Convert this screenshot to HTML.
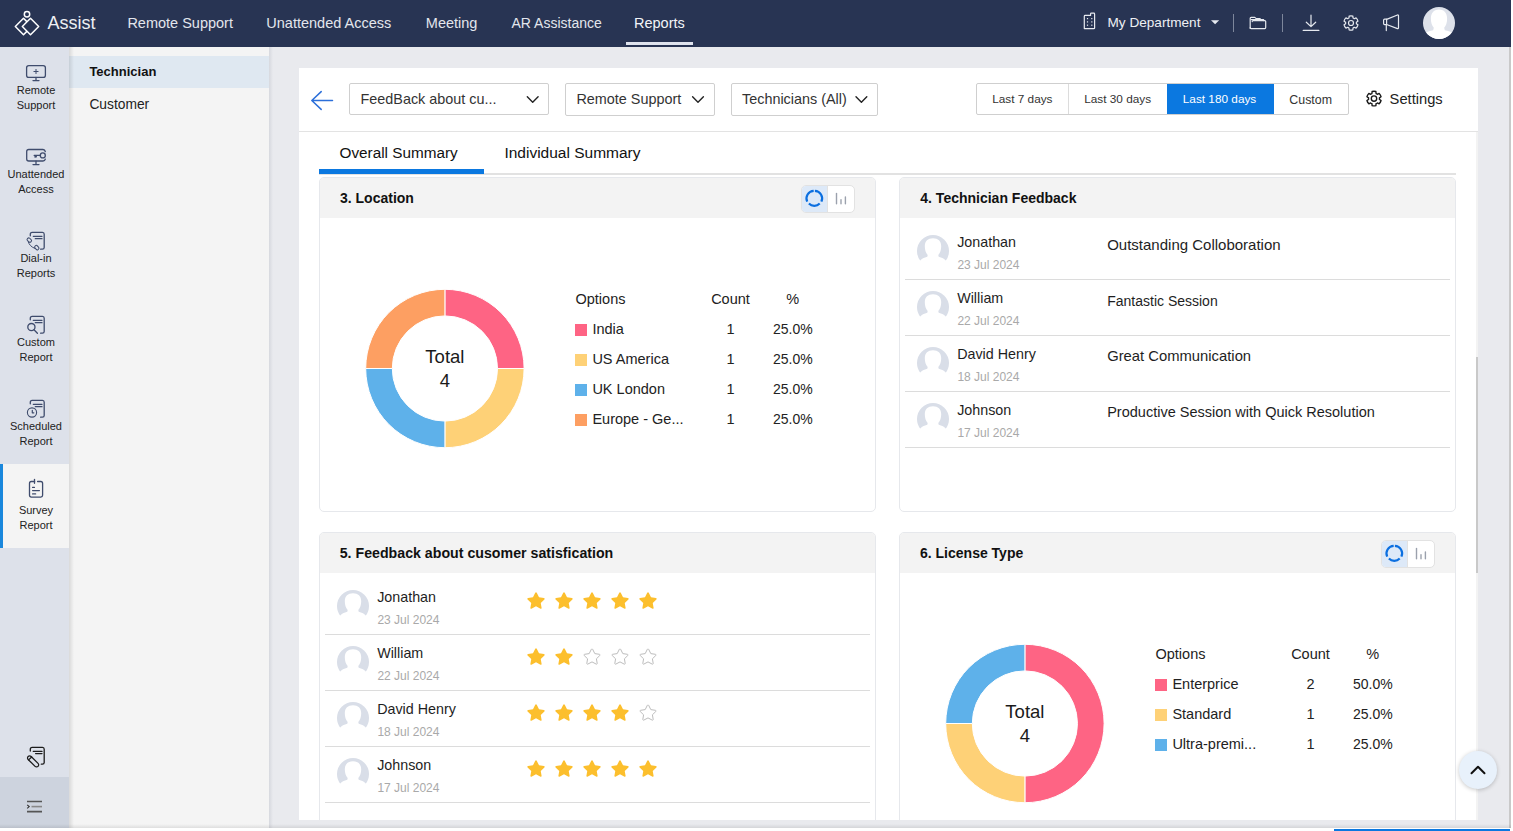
<!DOCTYPE html>
<html><head><meta charset="utf-8">
<style>
*{box-sizing:border-box;margin:0;padding:0}
html,body{width:1513px;height:831px;overflow:hidden;background:#fff;font-family:"Liberation Sans",sans-serif;color:#222}
.a{position:absolute;white-space:nowrap;line-height:1}
#hdr{position:absolute;left:0;top:0;width:1511px;height:47px;background:#283453}
.nav{color:#e3e6ed;font-size:14.5px}
#side{position:absolute;left:0;top:47px;width:69px;height:781px;background:#dde1ea}
.si{position:absolute;left:0;width:69px;height:84px}
.sl{position:absolute;left:0;width:72px;text-align:center;font-size:11px;line-height:15px;color:#222;white-space:normal}
#p2{position:absolute;left:69px;top:47px;width:200px;height:781px;background:#f4f4f4}
#main{position:absolute;left:269px;top:47px;width:1242px;height:781px;background:#e9eaee}
#wc{position:absolute;left:299px;top:68px;width:1179px;height:752px;background:#fff}
.dd{position:absolute;top:83px;height:33px;border:1px solid #cfcfcf;border-radius:2px;background:#fff}
.ddt{position:absolute;font-size:14.4px;color:#333}
.card{position:absolute;width:557px;border:1px solid #e6e8ec;border-radius:5px;background:#fff;overflow:hidden}
.ch{position:absolute;left:0;top:0;right:0;height:40px;background:#f3f3f3}
.ct{position:absolute;left:20px;font-size:14px;font-weight:bold;color:#111}
.lg{position:absolute;font-size:14.5px;color:#222}
.sw{position:absolute;width:12px;height:12px}
.nm{position:absolute;font-size:14.3px;color:#1e1e1e}
.dt{position:absolute;font-size:12px;color:#a9a9a9}
.hr{position:absolute;height:1px;background:#dcdcdc}
</style></head><body>

<!-- HEADER -->
<div id="hdr">
 <svg class="a" style="left:0;top:0" width="46" height="47" viewBox="0 0 46 47">
  <g fill="none" stroke="#fff" stroke-width="1.5" stroke-linejoin="round" stroke-linecap="round">
   <circle cx="27" cy="14.3" r="2.7"/>
   <path d="M26.6 21.4 L23.5 18.3 L15.3 26.5 L23.5 34.7 L26.6 31.6"/>
   <path d="M30.5 18.3 L38.7 26.5 L30.5 34.7 L22.3 26.5 Z"/>
  </g>
 </svg>
 <div class="a" style="left:47.5px;top:13.8px;font-size:18px;color:#eef0f4">Assist</div>
 <div class="a nav" style="left:127.4px;top:15.8px">Remote Support</div>
 <div class="a nav" style="left:266.3px;top:15.8px">Unattended Access</div>
 <div class="a nav" style="left:425.8px;top:15.8px">Meeting</div>
 <div class="a nav" style="left:511.5px;top:16.2px;font-size:14px">AR Assistance</div>
 <div class="a nav" style="left:634px;top:15.8px;color:#f2f4f8">Reports</div>

 <svg class="a" style="left:1070px;top:0" width="400" height="47" viewBox="1070 0 400 47">
  <g fill="none" stroke="#e6e9ef" stroke-width="1.2" stroke-linejoin="round" stroke-linecap="round">
   <!-- building -->
   <path d="M1084.3 28.6 V16.2 C1084.3 15.7 1084.6 15.4 1085.1 15.4 H1090.6 V13.8 C1090.6 13.3 1090.9 13.1 1091.4 13.1 H1093.8 C1094.3 13.1 1094.6 13.4 1094.6 13.9 V27.9 C1094.6 28.4 1094.3 28.6 1093.8 28.6 Z"/>
   <!-- folder -->
   <path d="M1250.2 28.5 V18.3 C1250.2 17.7 1250.5 17.4 1251.1 17.4 H1254.8 L1256.2 18.6 H1260.2" />
   <path d="M1252.2 21.6 C1252.2 21 1252.5 20.6 1253.1 20.6 H1264.8 C1265.4 20.6 1265.7 21 1265.7 21.6 V27.6 C1265.7 28.2 1265.4 28.6 1264.8 28.6 H1251.1 C1250.5 28.6 1250.2 28.2 1250.2 27.6"/>
   <path d="M1251.2 19.6 H1263.6 V20.6"/>
   <!-- download -->
   <path d="M1311 15.2 V26.3 M1306.3 22.2 L1311 26.6 L1315.7 22.2"/>
   <path d="M1303.3 30.4 H1318.8" stroke-width="1.4"/>
   <!-- megaphone -->
   <path d="M1386.6 19.4 L1397.5 15 C1398 14.8 1398.5 15.1 1398.5 15.6 V28 C1398.5 28.5 1398 28.8 1397.5 28.6 L1386.6 24.5"/>
   <path d="M1386.6 19.2 H1384.6 C1384 19.2 1383.6 19.6 1383.6 20.2 V23.6 C1383.6 24.2 1384 24.6 1384.6 24.6 H1386.6 Z"/>
   <path d="M1386.3 24.8 V30.6"/>
  </g>
  <g fill="#e6e9ef">
   <rect x="1086.9" y="18" width="1.2" height="1.2"/><rect x="1091.2" y="18" width="1.2" height="1.2"/>
   <rect x="1086.9" y="21.3" width="1.2" height="1.2"/><rect x="1091.2" y="21.3" width="1.2" height="1.2"/>
   <rect x="1086.9" y="24.6" width="1.2" height="1.2"/><rect x="1091.2" y="24.6" width="1.2" height="1.2"/>
   <path d="M1211 20.3 H1219.2 L1215.1 24.3 Z"/>
  </g>
  <rect x="1233" y="14" width="1" height="18" fill="#7d869b"/>
  <rect x="1282" y="14" width="1" height="18" fill="#7d869b"/>
  <g fill="none" stroke="#e6e9ef" stroke-width="1.2" stroke-linejoin="round"><path d="M1349.14 16.05 A7.20 7.20 0 0 1 1352.86 16.05 L1353.02 17.99 A5.40 5.40 0 0 1 1354.32 18.74 L1356.09 17.91 A7.20 7.20 0 0 1 1357.95 21.14 L1356.35 22.25 A5.40 5.40 0 0 1 1356.35 23.75 L1357.95 24.86 A7.20 7.20 0 0 1 1356.09 28.09 L1354.32 27.26 A5.40 5.40 0 0 1 1353.02 28.01 L1352.86 29.95 A7.20 7.20 0 0 1 1349.14 29.95 L1348.98 28.01 A5.40 5.40 0 0 1 1347.68 27.26 L1345.91 28.09 A7.20 7.20 0 0 1 1344.05 24.86 L1345.65 23.75 A5.40 5.40 0 0 1 1345.65 22.25 L1344.05 21.14 A7.20 7.20 0 0 1 1345.91 17.91 L1347.68 18.74 A5.40 5.40 0 0 1 1348.98 17.99 L1349.14 16.05 Z"/><circle cx="1351" cy="23" r="2.5"/></g>
  <clipPath id="avc"><circle cx="1439" cy="23" r="16"/></clipPath>
  <circle cx="1439" cy="23" r="16" fill="#dde1ea"/>
  <path clip-path="url(#avc)" d="M1439 9.6 C1433.4 9.6 1430.9 13.6 1430.9 18.8 C1430.9 22.6 1432 25.8 1433.8 27.8 L1433.2 30.2 C1428.5 31 1425 32.6 1423 35 L1423 40 L1455 40 L1455 35 C1453 32.6 1449.5 31 1444.8 30.2 L1444.2 27.8 C1446 25.8 1447.1 22.6 1447.1 18.8 C1447.1 13.6 1444.6 9.6 1439 9.6 Z" fill="#fff"/>
 </svg>
 <div class="a" style="left:1107.5px;top:16.2px;font-size:13.6px;color:#eef0f4">My Department</div>
 <div class="a" style="left:626px;top:42px;width:67px;height:3px;background:#dfe3ee"></div>
</div>

<!-- SIDEBAR -->
<div id="side">
 <div class="a" style="left:0;top:417px;width:69px;height:84px;background:#f4f4f4"></div>
 <div class="a" style="left:0;top:417px;width:3px;height:84px;background:#1a87dc"></div>
 <div class="a" style="left:0;top:730px;width:69px;height:51px;background:#cdd3de"></div>
</div>
<svg class="a" style="left:0;top:47px" width="69" height="781" viewBox="0 47 69 781">
 <g fill="none" stroke="#3f4c6d" stroke-width="1.3" stroke-linecap="round" stroke-linejoin="round">
  <!-- remote support -->
  <rect x="26.6" y="65.6" width="18.8" height="11.8" rx="2.2"/>
  <path d="M36 77.5 V80.3 M33 80.6 H39" />
  <path d="M36 69.4 V73.6 M33.9 71.5 H38.1" stroke-width="1"/>
  <!-- unattended -->
  <path d="M45.3 151.6 C45 150 44.3 149.5 43 149.5 H28.8 C27.4 149.5 26.7 150.2 26.7 151.6 V158.9 C26.7 160.3 27.4 161 28.8 161 H43 C44.3 161 45 160.5 45.3 159.2"/>
  <circle cx="42.8" cy="155.4" r="2.5"/>
  <path d="M34.2 155.4 H40.3 M35.2 155.6 L35 157.2 M36.4 155.6 L36.2 156.8" />
  <path d="M36 161.2 V164.2 M33 164.6 H39" />
  <!-- dial-in -->
  <path d="M30.3 235.8 V234.3 C30.3 233.2 31.1 232.4 32.2 232.4 H42.5 C43.6 232.4 44.2 233.2 44.2 234.3 V247.4 C44.2 248.5 43.5 249.2 42.4 249.2 H40.6"/>
  <path d="M33.3 236.3 H42 M35.3 238.7 H42"/>
  <rect x="-2.3" y="-1.6" width="4.6" height="3.2" rx="1.3" transform="translate(29.3 240.1) rotate(40)" stroke-width="1"/>
  <rect x="-2.3" y="-1.6" width="4.6" height="3.2" rx="1.3" transform="translate(36.8 247.6) rotate(50)" stroke-width="1"/>
  <path d="M28.3 241.9 C29 244.6 31.2 246.9 34.6 248.3" stroke-width="1"/>
  <!-- custom report -->
  <path d="M30.3 319.8 V318.3 C30.3 317.2 31.1 316.4 32.2 316.4 H42.5 C43.6 316.4 44.2 317.2 44.2 318.3 V331.4 C44.2 332.5 43.5 333.2 42.4 333.2 H40.6"/>
  <path d="M33.3 320.3 H42 M35.3 322.7 H42"/>
  <circle cx="31.4" cy="327.1" r="3.6"/>
  <path d="M34 329.8 L37.4 333.2"/>
  <!-- scheduled -->
  <path d="M30.3 403.8 V402.3 C30.3 401.2 31.1 400.4 32.2 400.4 H42.5 C43.6 400.4 44.2 401.2 44.2 402.3 V415.4 C44.2 416.5 43.5 417.2 42.4 417.2 H40.6"/>
  <path d="M33.3 404.3 H42 M35.3 406.7 H42"/>
  <circle cx="32" cy="412.5" r="4.6" stroke-width="1.1"/>
  <path d="M32.3 410.3 V412.8 H33.8" stroke-width="1.2"/>
  <!-- survey -->
  <path d="M34.6 481.5 H31.3 C30.1 481.5 29.5 482.2 29.5 483.4 V495.3 C29.5 496.5 30.2 497.1 31.4 497.1 H40.8 C42 497.1 42.6 496.5 42.6 495.3 V483.4 C42.6 482.2 42 481.5 40.8 481.5 H37.6"/>
  <path d="M34.5 479.4 V483.3"/>
  <path d="M32.6 487.4 H34.4 M32.6 490.6 H39.4 M32.6 493.9 H35.6"/>
 </g>
 <g fill="none" stroke="#1c1c1c" stroke-width="1.3" stroke-linecap="round" stroke-linejoin="round">
  <path d="M30.3 751 V749.3 C30.3 748.2 31.1 747.4 32.2 747.4 H42.5 C43.6 747.4 44.2 748.2 44.2 749.3 V762.4 C44.2 763.5 43.5 764.2 42.4 764.2 H41.3"/>
  <path d="M33.3 751.4 H42 M35.6 753.6 H42"/>
  <rect x="-7" y="-2.1" width="14" height="4.2" rx="2.1" transform="translate(33.1 761.4) rotate(45)" fill="#dde1ea"/>
  <path d="M-4.2 -2.1 V2.1" transform="translate(33.1 761.4) rotate(45)"/>
 </g>
 <g fill="none" stroke="#555" stroke-width="1.6">
  <path d="M27 801.5 H42 M27 811.6 H42"/><path d="M31.5 806.6 H42" stroke="#888"/>
  <path d="M27.2 804.8 L29.2 806.6 L27.2 808.4" stroke="#333" stroke-width="1.1"/>
 </g>
</svg>
<div class="sl" style="top:82.5px">Remote<br>Support</div>
<div class="sl" style="top:166.5px">Unattended<br>Access</div>
<div class="sl" style="top:250.5px">Dial-in<br>Reports</div>
<div class="sl" style="top:334.5px">Custom<br>Report</div>
<div class="sl" style="top:418.5px">Scheduled<br>Report</div>
<div class="sl" style="top:502.5px">Survey<br>Report</div>
<!-- PANEL 2 -->
<div id="p2">
 <div class="a" style="left:0;top:9px;width:200px;height:32px;background:#dfe8f1"></div>
 <div class="a" style="left:20.4px;top:18.2px;font-size:13px;font-weight:bold;color:#111">Technician</div>
 <div class="a" style="left:20.4px;top:50.6px;font-size:13.8px;color:#222">Customer</div>
 <div class="a" style="left:0;top:0;width:5px;height:781px;background:linear-gradient(to right,rgba(0,0,0,0.11),rgba(0,0,0,0))"></div>
</div>

<!-- MAIN -->
<div id="main"><div class="a" style="left:0;top:0;width:4px;height:781px;background:linear-gradient(to right,#d6d8de,#e9eaee)"></div></div>
<div id="wc">
 <svg class="a" style="left:10px;top:22px" width="26" height="22" viewBox="0 0 26 22">
  <path d="M23.5 10.5 H3 M12.2 1.6 L2.8 10.5 L12.2 19.4" fill="none" stroke="#2c6fd9" stroke-width="1.5" stroke-linecap="round" stroke-linejoin="round"/>
 </svg>
 <div class="a" style="left:0;top:63px;width:1179px;height:1px;background:#e3e3e3"></div>
 <div class="a" style="left:1177px;top:64px;width:2px;height:688px;background:#f3f3f3"></div>
 <div class="a" style="left:1177px;top:289px;width:2px;height:216px;background:#c9c9c9"></div>
</div>
<div class="dd" style="left:349px;width:200px;height:32px"></div>
<div class="a ddt" style="left:360.5px;top:91.8px">FeedBack about cu...</div>
<div class="dd" style="left:565px;width:150px"></div>
<div class="a ddt" style="left:576.4px;top:91.8px">Remote Support</div>
<div class="dd" style="left:731px;width:147px"></div>
<div class="a ddt" style="left:742px;top:91.8px">Technicians (All)</div>
<svg class="a" style="left:0;top:0" width="900" height="120">
 <g fill="none" stroke="#222" stroke-width="1.4" stroke-linecap="round" stroke-linejoin="round">
  <path d="M527.3 96.8 L532.7 102.2 L538.1 96.8"/>
  <path d="M692.6 96.8 L698 102.2 L703.4 96.8"/>
  <path d="M856 96.8 L861.4 102.2 L866.8 96.8"/>
 </g>
</svg>
<!-- date range -->
<div class="a" style="left:976px;top:83px;width:373px;height:32px;border:1px solid #cfcfcf;border-radius:2px;background:#fff"></div>
<div class="a" style="left:1068px;top:84px;width:1px;height:30px;background:#dcdcdc"></div>
<div class="a" style="left:1167px;top:84px;width:107px;height:30px;background:#0b78e0"></div>
<div class="a" style="left:992.2px;top:93.6px;font-size:11.8px;color:#333">Last 7 days</div>
<div class="a" style="left:1084.2px;top:93.6px;font-size:11.8px;color:#333">Last 30 days</div>
<div class="a" style="left:1182.8px;top:93.6px;font-size:11.8px;color:#fff">Last 180 days</div>
<div class="a" style="left:1289.3px;top:93.6px;font-size:12.4px;color:#333">Custom</div>
<svg class="a" style="left:1354px;top:80px" width="40" height="40" viewBox="1354 80 40 40"><g fill="none" stroke="#1a1a1a" stroke-width="1.4" stroke-linejoin="round"><path d="M1372.11 91.55 A7.30 7.30 0 0 1 1375.89 91.55 L1376.06 93.50 A5.50 5.50 0 0 1 1377.39 94.27 L1379.16 93.44 A7.30 7.30 0 0 1 1381.05 96.71 L1379.45 97.83 A5.50 5.50 0 0 1 1379.45 99.37 L1381.05 100.49 A7.30 7.30 0 0 1 1379.16 103.76 L1377.39 102.93 A5.50 5.50 0 0 1 1376.06 103.70 L1375.89 105.65 A7.30 7.30 0 0 1 1372.11 105.65 L1371.94 103.70 A5.50 5.50 0 0 1 1370.61 102.93 L1368.84 103.76 A7.30 7.30 0 0 1 1366.95 100.49 L1368.55 99.37 A5.50 5.50 0 0 1 1368.55 97.83 L1366.95 96.71 A7.30 7.30 0 0 1 1368.84 93.44 L1370.61 94.27 A5.50 5.50 0 0 1 1371.94 93.50 L1372.11 91.55 Z"/><circle cx="1374" cy="98.6" r="2.7"/></g></svg>
<div class="a" style="left:1389.6px;top:91.6px;font-size:14.7px;color:#222">Settings</div>
<!-- cards -->
<div class="a" style="left:299px;top:132px;width:1177px;height:688px;overflow:hidden"><div class="a" style="left:-299px;top:-132px;width:1513px;height:831px">
<div class="card" style="left:319px;top:177px;height:335px"><div class="ch"></div></div>
<div class="a ct" style="left:340px;top:191.1px">3. Location</div>
<div class="a" style="left:801px;top:184.5px;width:54px;height:28px;border:1px solid #e2e2e2;border-radius:5px;background:#fff;overflow:hidden">
  <div class="a" style="left:0;top:0;width:25px;height:26px;background:#dde9f8"></div>
  <div class="a" style="left:25px;top:0;width:1px;height:26px;background:#e2e2e2"></div>
 </div>
 <svg class="a" style="left:801px;top:184.5px" width="54" height="28" viewBox="0 0 54 28">
  <g fill="none" stroke="#0b6fe0" stroke-width="2.2">
   <path d="M12.7 5.8 A7.6 7.6 0 0 0 6.2 16.6"/>
   <path d="M7.9 18.6 A7.6 7.6 0 0 0 18.7 18.6"/>
   <path d="M20.4 16.6 A7.6 7.6 0 0 0 13.9 5.8"/>
  </g>
  <g stroke="#9ba1ad" stroke-width="1.4" stroke-linecap="round">
   <path d="M35.5 8.4 V18.8"/><path d="M40 14.8 V18.8"/><path d="M44.4 11.9 V18.8"/>
  </g>
 </svg>
<svg class="a" style="left:359px;top:283px" width="172" height="172" viewBox="359 283 172 172"><path d="M444.90 289.30 A79.2 79.2 0 0 1 524.10 368.50 L497.50 368.50 A52.6 52.6 0 0 0 444.90 315.90 Z" fill="#fe6484" stroke="#fff" stroke-width="1"/><path d="M524.10 368.50 A79.2 79.2 0 0 1 444.90 447.70 L444.90 421.10 A52.6 52.6 0 0 0 497.50 368.50 Z" fill="#fed177" stroke="#fff" stroke-width="1"/><path d="M444.90 447.70 A79.2 79.2 0 0 1 365.70 368.50 L392.30 368.50 A52.6 52.6 0 0 0 444.90 421.10 Z" fill="#5eb1ea" stroke="#fff" stroke-width="1"/><path d="M365.70 368.50 A79.2 79.2 0 0 1 444.90 289.30 L444.90 315.90 A52.6 52.6 0 0 0 392.30 368.50 Z" fill="#fd9f62" stroke="#fff" stroke-width="1"/></svg>
<div class="a" style="left:404.9px;width:80px;text-align:center;top:347.5px;font-size:18.5px;color:#1a1a1a">Total</div>
<div class="a" style="left:404.9px;width:80px;text-align:center;top:372.0px;font-size:18.5px;color:#1a1a1a">4</div>
<div class="a lg" style="left:575.5px;top:291.9px">Options</div>
<div class="a lg" style="left:700.5px;width:60px;text-align:center;top:291.9px">Count</div>
<div class="a lg" style="left:762.8px;width:60px;text-align:center;top:291.9px">%</div>
<div class="a sw" style="left:575px;top:324.1px;background:#fe6484"></div>
<div class="a lg" style="left:592.4px;top:322.1px">India</div>
<div class="a lg" style="left:700.5px;width:60px;text-align:center;top:322.1px">1</div>
<div class="a lg" style="font-size:14px;left:762.8px;width:60px;text-align:center;top:321.7px">25.0%</div>
<div class="a sw" style="left:575px;top:354.1px;background:#fed177"></div>
<div class="a lg" style="left:592.4px;top:352.1px">US America</div>
<div class="a lg" style="left:700.5px;width:60px;text-align:center;top:352.1px">1</div>
<div class="a lg" style="font-size:14px;left:762.8px;width:60px;text-align:center;top:351.7px">25.0%</div>
<div class="a sw" style="left:575px;top:384.1px;background:#5eb1ea"></div>
<div class="a lg" style="left:592.4px;top:382.1px">UK London</div>
<div class="a lg" style="left:700.5px;width:60px;text-align:center;top:382.1px">1</div>
<div class="a lg" style="font-size:14px;left:762.8px;width:60px;text-align:center;top:381.7px">25.0%</div>
<div class="a sw" style="left:575px;top:414.1px;background:#fd9f62"></div>
<div class="a lg" style="left:592.4px;top:412.1px">Europe - Ge...</div>
<div class="a lg" style="left:700.5px;width:60px;text-align:center;top:412.1px">1</div>
<div class="a lg" style="font-size:14px;left:762.8px;width:60px;text-align:center;top:411.7px">25.0%</div>
<div class="card" style="left:899px;top:177px;height:335px"><div class="ch"></div></div>
<div class="a ct" style="left:920.3px;top:191.0px">4. Technician Feedback</div>
<svg class="a" style="left:916px;top:234px" width="34" height="32" viewBox="0 0 34 32"><defs><clipPath id="c1"><rect x="0" y="0" width="34" height="27"/></clipPath></defs>
<g clip-path="url(#c1)"><circle cx="17" cy="17" r="16" fill="#d9dee8"/>
<path d="M17 4.3 C11.9 4.3 8.8 7.3 8.8 12.2 C8.8 15.8 9.8 18.9 11.7 21 L11.3 22.7 C8.1 23.5 5.3 24.9 3.7 27.2 L3 32 H31 L30.3 27.2 C28.7 24.9 25.9 23.5 22.7 22.7 L22.3 21 C24.2 18.9 25.2 15.8 25.2 12.2 C25.2 7.3 22.1 4.3 17 4.3 Z" fill="#fff"/></g></svg>
<div class="a nm" style="left:957.2px;top:234.6px">Jonathan</div>
<div class="a dt" style="left:957.4px;top:258.8px">23 Jul 2024</div>
<div class="a" style="left:1107.2px;top:237.0px;font-size:15px;color:#1e1e1e">Outstanding Colloboration</div>
<div class="a hr" style="left:905px;top:279px;width:545px"></div>
<svg class="a" style="left:916px;top:290px" width="34" height="32" viewBox="0 0 34 32"><defs><clipPath id="c2"><rect x="0" y="0" width="34" height="27"/></clipPath></defs>
<g clip-path="url(#c2)"><circle cx="17" cy="17" r="16" fill="#d9dee8"/>
<path d="M17 4.3 C11.9 4.3 8.8 7.3 8.8 12.2 C8.8 15.8 9.8 18.9 11.7 21 L11.3 22.7 C8.1 23.5 5.3 24.9 3.7 27.2 L3 32 H31 L30.3 27.2 C28.7 24.9 25.9 23.5 22.7 22.7 L22.3 21 C24.2 18.9 25.2 15.8 25.2 12.2 C25.2 7.3 22.1 4.3 17 4.3 Z" fill="#fff"/></g></svg>
<div class="a nm" style="left:957.2px;top:290.6px">William</div>
<div class="a dt" style="left:957.4px;top:314.8px">22 Jul 2024</div>
<div class="a" style="left:1107.2px;top:293.8px;font-size:14px;color:#1e1e1e">Fantastic Session</div>
<div class="a hr" style="left:905px;top:335px;width:545px"></div>
<svg class="a" style="left:916px;top:346px" width="34" height="32" viewBox="0 0 34 32"><defs><clipPath id="c3"><rect x="0" y="0" width="34" height="27"/></clipPath></defs>
<g clip-path="url(#c3)"><circle cx="17" cy="17" r="16" fill="#d9dee8"/>
<path d="M17 4.3 C11.9 4.3 8.8 7.3 8.8 12.2 C8.8 15.8 9.8 18.9 11.7 21 L11.3 22.7 C8.1 23.5 5.3 24.9 3.7 27.2 L3 32 H31 L30.3 27.2 C28.7 24.9 25.9 23.5 22.7 22.7 L22.3 21 C24.2 18.9 25.2 15.8 25.2 12.2 C25.2 7.3 22.1 4.3 17 4.3 Z" fill="#fff"/></g></svg>
<div class="a nm" style="left:957.2px;top:346.6px">David Henry</div>
<div class="a dt" style="left:957.4px;top:370.8px">18 Jul 2024</div>
<div class="a" style="left:1107.2px;top:349.2px;font-size:14.8px;color:#1e1e1e">Great Communication</div>
<div class="a hr" style="left:905px;top:391px;width:545px"></div>
<svg class="a" style="left:916px;top:402px" width="34" height="32" viewBox="0 0 34 32"><defs><clipPath id="c4"><rect x="0" y="0" width="34" height="27"/></clipPath></defs>
<g clip-path="url(#c4)"><circle cx="17" cy="17" r="16" fill="#d9dee8"/>
<path d="M17 4.3 C11.9 4.3 8.8 7.3 8.8 12.2 C8.8 15.8 9.8 18.9 11.7 21 L11.3 22.7 C8.1 23.5 5.3 24.9 3.7 27.2 L3 32 H31 L30.3 27.2 C28.7 24.9 25.9 23.5 22.7 22.7 L22.3 21 C24.2 18.9 25.2 15.8 25.2 12.2 C25.2 7.3 22.1 4.3 17 4.3 Z" fill="#fff"/></g></svg>
<div class="a nm" style="left:957.2px;top:402.6px">Johnson</div>
<div class="a dt" style="left:957.4px;top:426.8px">17 Jul 2024</div>
<div class="a" style="left:1107.2px;top:405.4px;font-size:14.5px;color:#1e1e1e">Productive Session with Quick Resolution</div>
<div class="a hr" style="left:905px;top:447px;width:545px"></div>
<div class="card" style="left:319px;top:532px;height:400px"><div class="ch"></div></div>
<div class="a ct" style="left:339.7px;top:546.0px;font-size:14.2px">5. Feedback about cusomer satisfication</div>
<svg class="a" style="left:336px;top:589px" width="34" height="32" viewBox="0 0 34 32"><defs><clipPath id="c5"><rect x="0" y="0" width="34" height="27"/></clipPath></defs>
<g clip-path="url(#c5)"><circle cx="17" cy="17" r="16" fill="#d9dee8"/>
<path d="M17 4.3 C11.9 4.3 8.8 7.3 8.8 12.2 C8.8 15.8 9.8 18.9 11.7 21 L11.3 22.7 C8.1 23.5 5.3 24.9 3.7 27.2 L3 32 H31 L30.3 27.2 C28.7 24.9 25.9 23.5 22.7 22.7 L22.3 21 C24.2 18.9 25.2 15.8 25.2 12.2 C25.2 7.3 22.1 4.3 17 4.3 Z" fill="#fff"/></g></svg>
<div class="a nm" style="left:377.2px;top:589.6px">Jonathan</div>
<div class="a dt" style="left:377.4px;top:613.8px">23 Jul 2024</div>
<svg class="a" style="left:527px;top:592px" width="18" height="18" viewBox="0 0 18 18"><path d="M9 1.2 C9.3 1.2 9.5 1.4 9.7 1.7 L11.8 5.9 L16.4 6.6 C17 6.7 17.2 7.4 16.8 7.8 L13.4 11.1 L14.2 15.7 C14.3 16.3 13.7 16.7 13.2 16.4 L9 14.2 L4.8 16.4 C4.3 16.7 3.7 16.3 3.8 15.7 L4.6 11.1 L1.2 7.8 C0.8 7.4 1 6.7 1.6 6.6 L6.2 5.9 L8.3 1.7 C8.5 1.4 8.7 1.2 9 1.2 Z" fill="#fcbf2d" transform="translate(9 9) scale(1.08) translate(-9 -9.3)"/></svg><svg class="a" style="left:555px;top:592px" width="18" height="18" viewBox="0 0 18 18"><path d="M9 1.2 C9.3 1.2 9.5 1.4 9.7 1.7 L11.8 5.9 L16.4 6.6 C17 6.7 17.2 7.4 16.8 7.8 L13.4 11.1 L14.2 15.7 C14.3 16.3 13.7 16.7 13.2 16.4 L9 14.2 L4.8 16.4 C4.3 16.7 3.7 16.3 3.8 15.7 L4.6 11.1 L1.2 7.8 C0.8 7.4 1 6.7 1.6 6.6 L6.2 5.9 L8.3 1.7 C8.5 1.4 8.7 1.2 9 1.2 Z" fill="#fcbf2d" transform="translate(9 9) scale(1.08) translate(-9 -9.3)"/></svg><svg class="a" style="left:583px;top:592px" width="18" height="18" viewBox="0 0 18 18"><path d="M9 1.2 C9.3 1.2 9.5 1.4 9.7 1.7 L11.8 5.9 L16.4 6.6 C17 6.7 17.2 7.4 16.8 7.8 L13.4 11.1 L14.2 15.7 C14.3 16.3 13.7 16.7 13.2 16.4 L9 14.2 L4.8 16.4 C4.3 16.7 3.7 16.3 3.8 15.7 L4.6 11.1 L1.2 7.8 C0.8 7.4 1 6.7 1.6 6.6 L6.2 5.9 L8.3 1.7 C8.5 1.4 8.7 1.2 9 1.2 Z" fill="#fcbf2d" transform="translate(9 9) scale(1.08) translate(-9 -9.3)"/></svg><svg class="a" style="left:611px;top:592px" width="18" height="18" viewBox="0 0 18 18"><path d="M9 1.2 C9.3 1.2 9.5 1.4 9.7 1.7 L11.8 5.9 L16.4 6.6 C17 6.7 17.2 7.4 16.8 7.8 L13.4 11.1 L14.2 15.7 C14.3 16.3 13.7 16.7 13.2 16.4 L9 14.2 L4.8 16.4 C4.3 16.7 3.7 16.3 3.8 15.7 L4.6 11.1 L1.2 7.8 C0.8 7.4 1 6.7 1.6 6.6 L6.2 5.9 L8.3 1.7 C8.5 1.4 8.7 1.2 9 1.2 Z" fill="#fcbf2d" transform="translate(9 9) scale(1.08) translate(-9 -9.3)"/></svg><svg class="a" style="left:639px;top:592px" width="18" height="18" viewBox="0 0 18 18"><path d="M9 1.2 C9.3 1.2 9.5 1.4 9.7 1.7 L11.8 5.9 L16.4 6.6 C17 6.7 17.2 7.4 16.8 7.8 L13.4 11.1 L14.2 15.7 C14.3 16.3 13.7 16.7 13.2 16.4 L9 14.2 L4.8 16.4 C4.3 16.7 3.7 16.3 3.8 15.7 L4.6 11.1 L1.2 7.8 C0.8 7.4 1 6.7 1.6 6.6 L6.2 5.9 L8.3 1.7 C8.5 1.4 8.7 1.2 9 1.2 Z" fill="#fcbf2d" transform="translate(9 9) scale(1.08) translate(-9 -9.3)"/></svg>
<div class="a hr" style="left:325px;top:634px;width:545px"></div>
<svg class="a" style="left:336px;top:645px" width="34" height="32" viewBox="0 0 34 32"><defs><clipPath id="c6"><rect x="0" y="0" width="34" height="27"/></clipPath></defs>
<g clip-path="url(#c6)"><circle cx="17" cy="17" r="16" fill="#d9dee8"/>
<path d="M17 4.3 C11.9 4.3 8.8 7.3 8.8 12.2 C8.8 15.8 9.8 18.9 11.7 21 L11.3 22.7 C8.1 23.5 5.3 24.9 3.7 27.2 L3 32 H31 L30.3 27.2 C28.7 24.9 25.9 23.5 22.7 22.7 L22.3 21 C24.2 18.9 25.2 15.8 25.2 12.2 C25.2 7.3 22.1 4.3 17 4.3 Z" fill="#fff"/></g></svg>
<div class="a nm" style="left:377.2px;top:645.6px">William</div>
<div class="a dt" style="left:377.4px;top:669.8px">22 Jul 2024</div>
<svg class="a" style="left:527px;top:648px" width="18" height="18" viewBox="0 0 18 18"><path d="M9 1.2 C9.3 1.2 9.5 1.4 9.7 1.7 L11.8 5.9 L16.4 6.6 C17 6.7 17.2 7.4 16.8 7.8 L13.4 11.1 L14.2 15.7 C14.3 16.3 13.7 16.7 13.2 16.4 L9 14.2 L4.8 16.4 C4.3 16.7 3.7 16.3 3.8 15.7 L4.6 11.1 L1.2 7.8 C0.8 7.4 1 6.7 1.6 6.6 L6.2 5.9 L8.3 1.7 C8.5 1.4 8.7 1.2 9 1.2 Z" fill="#fcbf2d" transform="translate(9 9) scale(1.08) translate(-9 -9.3)"/></svg><svg class="a" style="left:555px;top:648px" width="18" height="18" viewBox="0 0 18 18"><path d="M9 1.2 C9.3 1.2 9.5 1.4 9.7 1.7 L11.8 5.9 L16.4 6.6 C17 6.7 17.2 7.4 16.8 7.8 L13.4 11.1 L14.2 15.7 C14.3 16.3 13.7 16.7 13.2 16.4 L9 14.2 L4.8 16.4 C4.3 16.7 3.7 16.3 3.8 15.7 L4.6 11.1 L1.2 7.8 C0.8 7.4 1 6.7 1.6 6.6 L6.2 5.9 L8.3 1.7 C8.5 1.4 8.7 1.2 9 1.2 Z" fill="#fcbf2d" transform="translate(9 9) scale(1.08) translate(-9 -9.3)"/></svg><svg class="a" style="left:583px;top:648px" width="18" height="18" viewBox="0 0 18 18"><path d="M9 1.2 C9.3 1.2 9.5 1.4 9.7 1.7 L11.8 5.9 L16.4 6.6 C17 6.7 17.2 7.4 16.8 7.8 L13.4 11.1 L14.2 15.7 C14.3 16.3 13.7 16.7 13.2 16.4 L9 14.2 L4.8 16.4 C4.3 16.7 3.7 16.3 3.8 15.7 L4.6 11.1 L1.2 7.8 C0.8 7.4 1 6.7 1.6 6.6 L6.2 5.9 L8.3 1.7 C8.5 1.4 8.7 1.2 9 1.2 Z" fill="none" stroke="#bdbdbd" stroke-width="1" transform="translate(9 9) scale(1.0) translate(-9 -9.3)"/></svg><svg class="a" style="left:611px;top:648px" width="18" height="18" viewBox="0 0 18 18"><path d="M9 1.2 C9.3 1.2 9.5 1.4 9.7 1.7 L11.8 5.9 L16.4 6.6 C17 6.7 17.2 7.4 16.8 7.8 L13.4 11.1 L14.2 15.7 C14.3 16.3 13.7 16.7 13.2 16.4 L9 14.2 L4.8 16.4 C4.3 16.7 3.7 16.3 3.8 15.7 L4.6 11.1 L1.2 7.8 C0.8 7.4 1 6.7 1.6 6.6 L6.2 5.9 L8.3 1.7 C8.5 1.4 8.7 1.2 9 1.2 Z" fill="none" stroke="#bdbdbd" stroke-width="1" transform="translate(9 9) scale(1.0) translate(-9 -9.3)"/></svg><svg class="a" style="left:639px;top:648px" width="18" height="18" viewBox="0 0 18 18"><path d="M9 1.2 C9.3 1.2 9.5 1.4 9.7 1.7 L11.8 5.9 L16.4 6.6 C17 6.7 17.2 7.4 16.8 7.8 L13.4 11.1 L14.2 15.7 C14.3 16.3 13.7 16.7 13.2 16.4 L9 14.2 L4.8 16.4 C4.3 16.7 3.7 16.3 3.8 15.7 L4.6 11.1 L1.2 7.8 C0.8 7.4 1 6.7 1.6 6.6 L6.2 5.9 L8.3 1.7 C8.5 1.4 8.7 1.2 9 1.2 Z" fill="none" stroke="#bdbdbd" stroke-width="1" transform="translate(9 9) scale(1.0) translate(-9 -9.3)"/></svg>
<div class="a hr" style="left:325px;top:690px;width:545px"></div>
<svg class="a" style="left:336px;top:701px" width="34" height="32" viewBox="0 0 34 32"><defs><clipPath id="c7"><rect x="0" y="0" width="34" height="27"/></clipPath></defs>
<g clip-path="url(#c7)"><circle cx="17" cy="17" r="16" fill="#d9dee8"/>
<path d="M17 4.3 C11.9 4.3 8.8 7.3 8.8 12.2 C8.8 15.8 9.8 18.9 11.7 21 L11.3 22.7 C8.1 23.5 5.3 24.9 3.7 27.2 L3 32 H31 L30.3 27.2 C28.7 24.9 25.9 23.5 22.7 22.7 L22.3 21 C24.2 18.9 25.2 15.8 25.2 12.2 C25.2 7.3 22.1 4.3 17 4.3 Z" fill="#fff"/></g></svg>
<div class="a nm" style="left:377.2px;top:701.6px">David Henry</div>
<div class="a dt" style="left:377.4px;top:725.8px">18 Jul 2024</div>
<svg class="a" style="left:527px;top:704px" width="18" height="18" viewBox="0 0 18 18"><path d="M9 1.2 C9.3 1.2 9.5 1.4 9.7 1.7 L11.8 5.9 L16.4 6.6 C17 6.7 17.2 7.4 16.8 7.8 L13.4 11.1 L14.2 15.7 C14.3 16.3 13.7 16.7 13.2 16.4 L9 14.2 L4.8 16.4 C4.3 16.7 3.7 16.3 3.8 15.7 L4.6 11.1 L1.2 7.8 C0.8 7.4 1 6.7 1.6 6.6 L6.2 5.9 L8.3 1.7 C8.5 1.4 8.7 1.2 9 1.2 Z" fill="#fcbf2d" transform="translate(9 9) scale(1.08) translate(-9 -9.3)"/></svg><svg class="a" style="left:555px;top:704px" width="18" height="18" viewBox="0 0 18 18"><path d="M9 1.2 C9.3 1.2 9.5 1.4 9.7 1.7 L11.8 5.9 L16.4 6.6 C17 6.7 17.2 7.4 16.8 7.8 L13.4 11.1 L14.2 15.7 C14.3 16.3 13.7 16.7 13.2 16.4 L9 14.2 L4.8 16.4 C4.3 16.7 3.7 16.3 3.8 15.7 L4.6 11.1 L1.2 7.8 C0.8 7.4 1 6.7 1.6 6.6 L6.2 5.9 L8.3 1.7 C8.5 1.4 8.7 1.2 9 1.2 Z" fill="#fcbf2d" transform="translate(9 9) scale(1.08) translate(-9 -9.3)"/></svg><svg class="a" style="left:583px;top:704px" width="18" height="18" viewBox="0 0 18 18"><path d="M9 1.2 C9.3 1.2 9.5 1.4 9.7 1.7 L11.8 5.9 L16.4 6.6 C17 6.7 17.2 7.4 16.8 7.8 L13.4 11.1 L14.2 15.7 C14.3 16.3 13.7 16.7 13.2 16.4 L9 14.2 L4.8 16.4 C4.3 16.7 3.7 16.3 3.8 15.7 L4.6 11.1 L1.2 7.8 C0.8 7.4 1 6.7 1.6 6.6 L6.2 5.9 L8.3 1.7 C8.5 1.4 8.7 1.2 9 1.2 Z" fill="#fcbf2d" transform="translate(9 9) scale(1.08) translate(-9 -9.3)"/></svg><svg class="a" style="left:611px;top:704px" width="18" height="18" viewBox="0 0 18 18"><path d="M9 1.2 C9.3 1.2 9.5 1.4 9.7 1.7 L11.8 5.9 L16.4 6.6 C17 6.7 17.2 7.4 16.8 7.8 L13.4 11.1 L14.2 15.7 C14.3 16.3 13.7 16.7 13.2 16.4 L9 14.2 L4.8 16.4 C4.3 16.7 3.7 16.3 3.8 15.7 L4.6 11.1 L1.2 7.8 C0.8 7.4 1 6.7 1.6 6.6 L6.2 5.9 L8.3 1.7 C8.5 1.4 8.7 1.2 9 1.2 Z" fill="#fcbf2d" transform="translate(9 9) scale(1.08) translate(-9 -9.3)"/></svg><svg class="a" style="left:639px;top:704px" width="18" height="18" viewBox="0 0 18 18"><path d="M9 1.2 C9.3 1.2 9.5 1.4 9.7 1.7 L11.8 5.9 L16.4 6.6 C17 6.7 17.2 7.4 16.8 7.8 L13.4 11.1 L14.2 15.7 C14.3 16.3 13.7 16.7 13.2 16.4 L9 14.2 L4.8 16.4 C4.3 16.7 3.7 16.3 3.8 15.7 L4.6 11.1 L1.2 7.8 C0.8 7.4 1 6.7 1.6 6.6 L6.2 5.9 L8.3 1.7 C8.5 1.4 8.7 1.2 9 1.2 Z" fill="none" stroke="#bdbdbd" stroke-width="1" transform="translate(9 9) scale(1.0) translate(-9 -9.3)"/></svg>
<div class="a hr" style="left:325px;top:746px;width:545px"></div>
<svg class="a" style="left:336px;top:757px" width="34" height="32" viewBox="0 0 34 32"><defs><clipPath id="c8"><rect x="0" y="0" width="34" height="27"/></clipPath></defs>
<g clip-path="url(#c8)"><circle cx="17" cy="17" r="16" fill="#d9dee8"/>
<path d="M17 4.3 C11.9 4.3 8.8 7.3 8.8 12.2 C8.8 15.8 9.8 18.9 11.7 21 L11.3 22.7 C8.1 23.5 5.3 24.9 3.7 27.2 L3 32 H31 L30.3 27.2 C28.7 24.9 25.9 23.5 22.7 22.7 L22.3 21 C24.2 18.9 25.2 15.8 25.2 12.2 C25.2 7.3 22.1 4.3 17 4.3 Z" fill="#fff"/></g></svg>
<div class="a nm" style="left:377.2px;top:757.6px">Johnson</div>
<div class="a dt" style="left:377.4px;top:781.8px">17 Jul 2024</div>
<svg class="a" style="left:527px;top:760px" width="18" height="18" viewBox="0 0 18 18"><path d="M9 1.2 C9.3 1.2 9.5 1.4 9.7 1.7 L11.8 5.9 L16.4 6.6 C17 6.7 17.2 7.4 16.8 7.8 L13.4 11.1 L14.2 15.7 C14.3 16.3 13.7 16.7 13.2 16.4 L9 14.2 L4.8 16.4 C4.3 16.7 3.7 16.3 3.8 15.7 L4.6 11.1 L1.2 7.8 C0.8 7.4 1 6.7 1.6 6.6 L6.2 5.9 L8.3 1.7 C8.5 1.4 8.7 1.2 9 1.2 Z" fill="#fcbf2d" transform="translate(9 9) scale(1.08) translate(-9 -9.3)"/></svg><svg class="a" style="left:555px;top:760px" width="18" height="18" viewBox="0 0 18 18"><path d="M9 1.2 C9.3 1.2 9.5 1.4 9.7 1.7 L11.8 5.9 L16.4 6.6 C17 6.7 17.2 7.4 16.8 7.8 L13.4 11.1 L14.2 15.7 C14.3 16.3 13.7 16.7 13.2 16.4 L9 14.2 L4.8 16.4 C4.3 16.7 3.7 16.3 3.8 15.7 L4.6 11.1 L1.2 7.8 C0.8 7.4 1 6.7 1.6 6.6 L6.2 5.9 L8.3 1.7 C8.5 1.4 8.7 1.2 9 1.2 Z" fill="#fcbf2d" transform="translate(9 9) scale(1.08) translate(-9 -9.3)"/></svg><svg class="a" style="left:583px;top:760px" width="18" height="18" viewBox="0 0 18 18"><path d="M9 1.2 C9.3 1.2 9.5 1.4 9.7 1.7 L11.8 5.9 L16.4 6.6 C17 6.7 17.2 7.4 16.8 7.8 L13.4 11.1 L14.2 15.7 C14.3 16.3 13.7 16.7 13.2 16.4 L9 14.2 L4.8 16.4 C4.3 16.7 3.7 16.3 3.8 15.7 L4.6 11.1 L1.2 7.8 C0.8 7.4 1 6.7 1.6 6.6 L6.2 5.9 L8.3 1.7 C8.5 1.4 8.7 1.2 9 1.2 Z" fill="#fcbf2d" transform="translate(9 9) scale(1.08) translate(-9 -9.3)"/></svg><svg class="a" style="left:611px;top:760px" width="18" height="18" viewBox="0 0 18 18"><path d="M9 1.2 C9.3 1.2 9.5 1.4 9.7 1.7 L11.8 5.9 L16.4 6.6 C17 6.7 17.2 7.4 16.8 7.8 L13.4 11.1 L14.2 15.7 C14.3 16.3 13.7 16.7 13.2 16.4 L9 14.2 L4.8 16.4 C4.3 16.7 3.7 16.3 3.8 15.7 L4.6 11.1 L1.2 7.8 C0.8 7.4 1 6.7 1.6 6.6 L6.2 5.9 L8.3 1.7 C8.5 1.4 8.7 1.2 9 1.2 Z" fill="#fcbf2d" transform="translate(9 9) scale(1.08) translate(-9 -9.3)"/></svg><svg class="a" style="left:639px;top:760px" width="18" height="18" viewBox="0 0 18 18"><path d="M9 1.2 C9.3 1.2 9.5 1.4 9.7 1.7 L11.8 5.9 L16.4 6.6 C17 6.7 17.2 7.4 16.8 7.8 L13.4 11.1 L14.2 15.7 C14.3 16.3 13.7 16.7 13.2 16.4 L9 14.2 L4.8 16.4 C4.3 16.7 3.7 16.3 3.8 15.7 L4.6 11.1 L1.2 7.8 C0.8 7.4 1 6.7 1.6 6.6 L6.2 5.9 L8.3 1.7 C8.5 1.4 8.7 1.2 9 1.2 Z" fill="#fcbf2d" transform="translate(9 9) scale(1.08) translate(-9 -9.3)"/></svg>
<div class="a hr" style="left:325px;top:802px;width:545px"></div>
<div class="card" style="left:899px;top:532px;height:335px"><div class="ch"></div></div>
<div class="a ct" style="left:920px;top:546.1px">6. License Type</div>
<div class="a" style="left:1381px;top:539.5px;width:54px;height:28px;border:1px solid #e2e2e2;border-radius:5px;background:#fff;overflow:hidden">
  <div class="a" style="left:0;top:0;width:25px;height:26px;background:#dde9f8"></div>
  <div class="a" style="left:25px;top:0;width:1px;height:26px;background:#e2e2e2"></div>
 </div>
 <svg class="a" style="left:1381px;top:539.5px" width="54" height="28" viewBox="0 0 54 28">
  <g fill="none" stroke="#0b6fe0" stroke-width="2.2">
   <path d="M12.7 5.8 A7.6 7.6 0 0 0 6.2 16.6"/>
   <path d="M7.9 18.6 A7.6 7.6 0 0 0 18.7 18.6"/>
   <path d="M20.4 16.6 A7.6 7.6 0 0 0 13.9 5.8"/>
  </g>
  <g stroke="#9ba1ad" stroke-width="1.4" stroke-linecap="round">
   <path d="M35.5 8.4 V18.8"/><path d="M40 14.8 V18.8"/><path d="M44.4 11.9 V18.8"/>
  </g>
 </svg>
<svg class="a" style="left:939px;top:638px" width="172" height="172" viewBox="939 638 172 172"><path d="M1024.90 644.30 A79.2 79.2 0 0 1 1024.90 802.70 L1024.90 776.10 A52.6 52.6 0 0 0 1024.90 670.90 Z" fill="#fe6484" stroke="#fff" stroke-width="1"/><path d="M1024.90 802.70 A79.2 79.2 0 0 1 945.70 723.50 L972.30 723.50 A52.6 52.6 0 0 0 1024.90 776.10 Z" fill="#fed177" stroke="#fff" stroke-width="1"/><path d="M945.70 723.50 A79.2 79.2 0 0 1 1024.90 644.30 L1024.90 670.90 A52.6 52.6 0 0 0 972.30 723.50 Z" fill="#5eb1ea" stroke="#fff" stroke-width="1"/></svg>
<div class="a" style="left:984.9000000000001px;width:80px;text-align:center;top:702.5px;font-size:18.5px;color:#1a1a1a">Total</div>
<div class="a" style="left:984.9000000000001px;width:80px;text-align:center;top:727.0px;font-size:18.5px;color:#1a1a1a">4</div>
<div class="a lg" style="left:1155.5px;top:646.9px">Options</div>
<div class="a lg" style="left:1280.5px;width:60px;text-align:center;top:646.9px">Count</div>
<div class="a lg" style="left:1342.8px;width:60px;text-align:center;top:646.9px">%</div>
<div class="a sw" style="left:1155px;top:679.1px;background:#fe6484"></div>
<div class="a lg" style="left:1172.4px;top:677.1px">Enterprice</div>
<div class="a lg" style="left:1280.5px;width:60px;text-align:center;top:677.1px">2</div>
<div class="a lg" style="font-size:14px;left:1342.8px;width:60px;text-align:center;top:676.7px">50.0%</div>
<div class="a sw" style="left:1155px;top:709.1px;background:#fed177"></div>
<div class="a lg" style="left:1172.4px;top:707.1px">Standard</div>
<div class="a lg" style="left:1280.5px;width:60px;text-align:center;top:707.1px">1</div>
<div class="a lg" style="font-size:14px;left:1342.8px;width:60px;text-align:center;top:706.7px">25.0%</div>
<div class="a sw" style="left:1155px;top:739.1px;background:#5eb1ea"></div>
<div class="a lg" style="left:1172.4px;top:737.1px">Ultra-premi...</div>
<div class="a lg" style="left:1280.5px;width:60px;text-align:center;top:737.1px">1</div>
<div class="a lg" style="font-size:14px;left:1342.8px;width:60px;text-align:center;top:736.7px">25.0%</div>
</div></div>
<!-- tabs -->
<div class="a" style="left:339.5px;top:144.5px;font-size:15.3px;color:#111">Overall Summary</div>
<div class="a" style="left:504.4px;top:144.5px;font-size:15.5px;color:#111">Individual Summary</div>
<div class="a" style="left:319px;top:173px;width:1137px;height:2px;background:#e2e2e2"></div>
<div class="a" style="left:319px;top:169px;width:165px;height:5px;background:#0b78e0"></div>

<div class="a" style="left:1509px;top:47px;width:2px;height:782px;background:#c9c9c9"></div>
<div class="a" style="left:0;top:824px;width:1511px;height:4px;background:linear-gradient(to bottom,rgba(0,0,0,0),rgba(0,0,0,0.09))"></div>
<div class="a" style="left:0;top:828px;width:1513px;height:3px;background:#fff"></div>
<div class="a" style="left:1334px;top:829px;width:176px;height:2px;background:#0b78e0"></div>
<div class="a" style="left:1459px;top:751px;width:38px;height:38px;border-radius:50%;background:#e8f1fb;box-shadow:0 1px 4px rgba(0,0,0,0.22)"></div>
<svg class="a" style="left:1459px;top:751px" width="38" height="38" viewBox="0 0 38 38"><path d="M12.5 22.3 L19 15.8 L25.5 22.3" fill="none" stroke="#111" stroke-width="2" stroke-linecap="round" stroke-linejoin="round"/></svg>
</body></html>
